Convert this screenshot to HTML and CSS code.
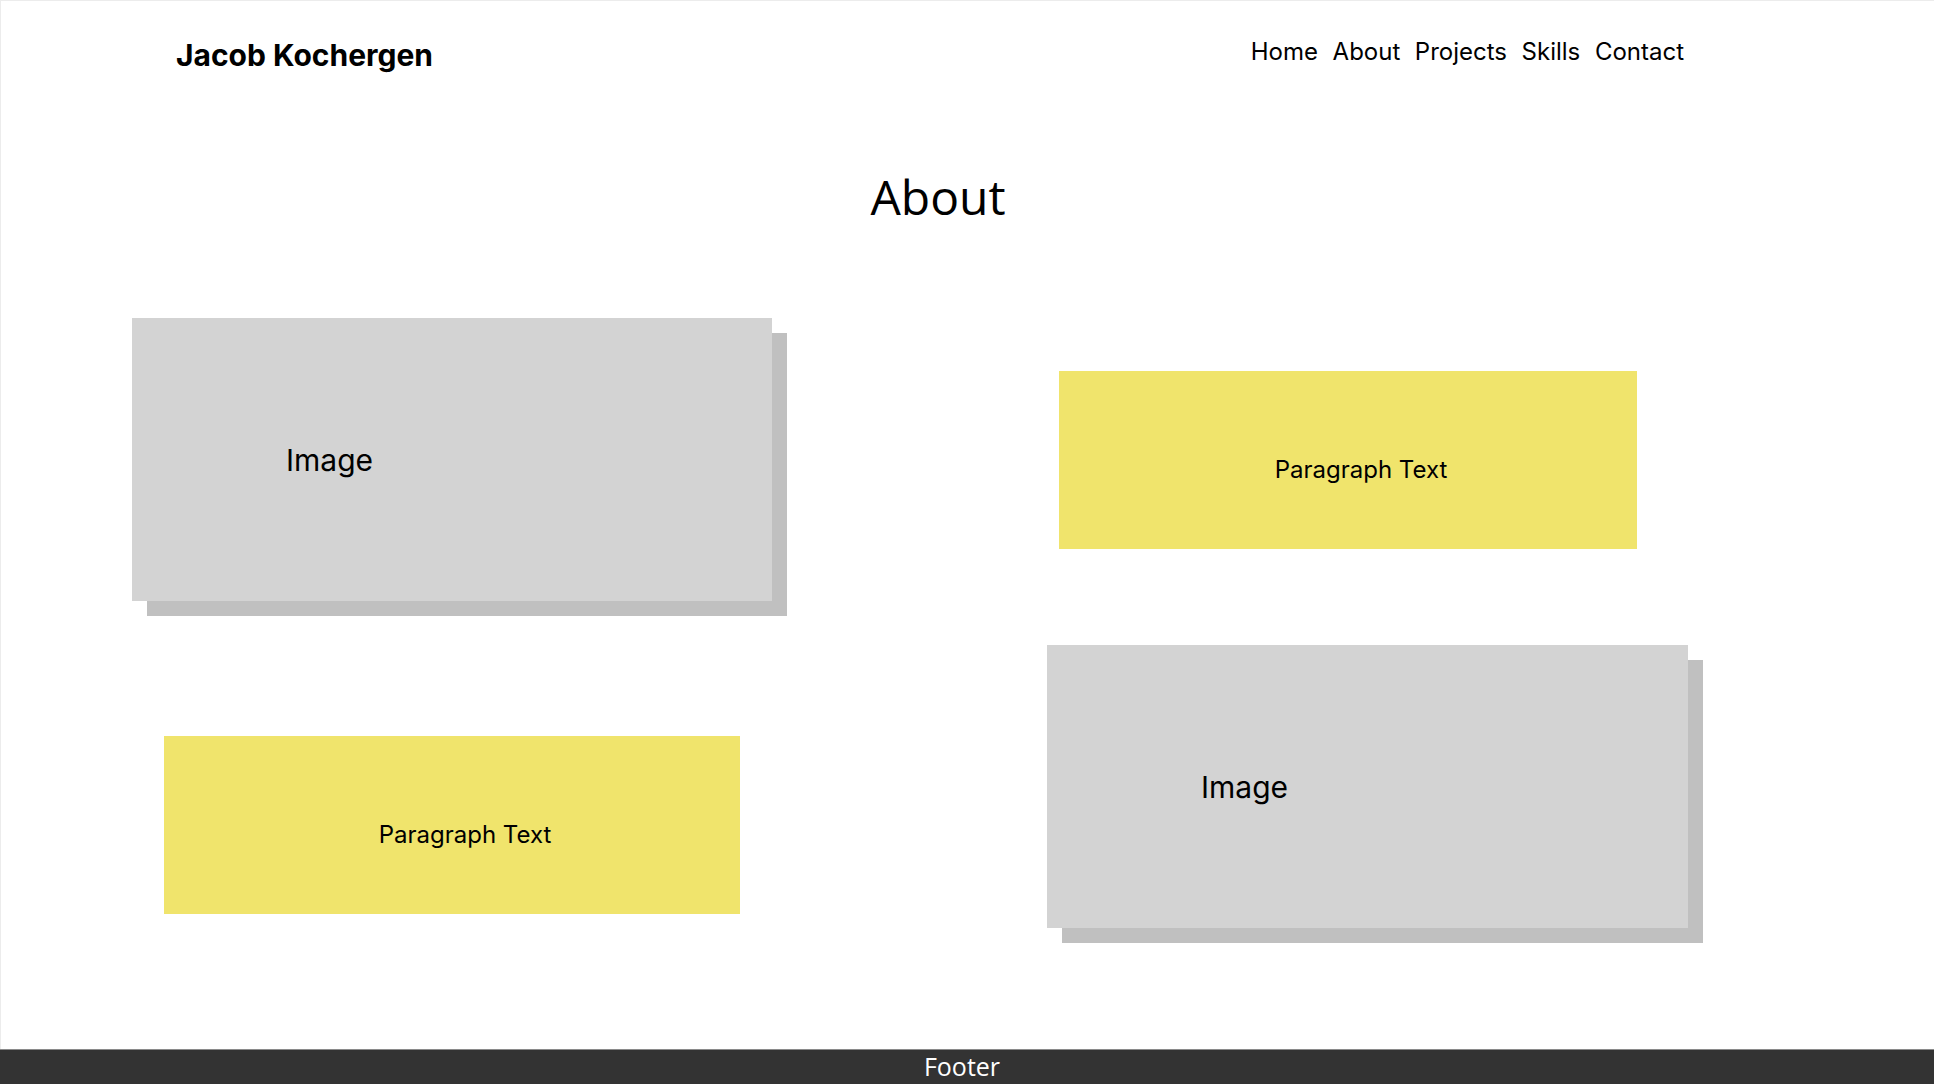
FILE: index.html
```html
<!DOCTYPE html>
<html>
<head>
    <title>Jacob Kochergen - About</title>
    <link rel="stylesheet" href="styles.css">
</head>
<body>
    <header class="header">
        <div class="logo">Jacob Kochergen</div>
        <nav class="nav">
            <a href="#">Home</a>
            <a href="#">About</a>
            <a href="#">Projects</a>
            <a href="#">Skills</a>
            <a href="#">Contact</a>
        </nav>
    </header>

    <main class="main">
        <h1 class="title">About</h1>

        <section class="about-grid">
            <div class="image">Image</div>
            <div class="para para-right">Paragraph Text</div>

            <div class="para para-left">Paragraph Text</div>
            <div class="image">Image</div>
        </section>
    </main>

    <footer class="footer">Footer</footer>
</body>
</html>
```

FILE: styles.css
```css
* {
    margin: 0;
    padding: 0;
    box-sizing: border-box;
}

html, body {
    height: 100%;
}

body {
    font-family: Inter, "Noto Sans", sans-serif;
    color: #000;
    background: #fff;
    box-shadow: inset 1px 1px 0 #ececec;
    display: flex;
    flex-direction: column;
}

.header {
    display: flex;
    justify-content: space-between;
    align-items: flex-start;
    padding: 35px 250px 0 176px;
}

.logo {
    font-size: 30px;
    font-weight: 700;
    line-height: 36px;
    padding-top: 2px;
}

.nav {
    display: flex;
    gap: 14.6px;
    padding-top: 2px;
}

.nav a {
    font-size: 24px;
    color: #000;
    text-decoration: none;
}

.main {
    flex: 1;
}

.title {
    font-family: "Open Sans", "Noto Sans", sans-serif;
    font-size: 48px;
    font-weight: 400;
    line-height: 68px;
    text-align: center;
    margin-top: 90px;
    padding-right: 58px;
}

.about-grid {
    display: grid;
    grid-template-columns: 640px 641px;
    column-gap: 275px;
    row-gap: 44px;
    align-items: center;
    margin: 87px 0 0 132px;
}

.image {
    height: 283px;
    background: #d3d3d3;
    box-shadow: 15px 15px 0 #c0c0c0;
    display: flex;
    align-items: center;
    padding-left: 154px;
    font-size: 30px;
}

.para {
    height: 178px;
    background: #f0e46c;
    display: flex;
    align-items: center;
    justify-content: center;
    padding: 19px 0 0 26px;
    font-size: 24px;
}

.para-right {
    width: 578px;
    margin-left: 12px;
}

.para-left {
    width: 576px;
    margin-left: 32px;
    align-self: start;
    margin-top: 91px;
}

.footer {
    height: 35px;
    background: #333;
    border-top: 1px solid #8a8a8a;
    color: #fff;
    font-family: "Open Sans", "Noto Sans", sans-serif;
    font-size: 25px;
    line-height: 32px;
    text-align: center;
    padding-right: 10px;
    overflow: hidden;
}
```
